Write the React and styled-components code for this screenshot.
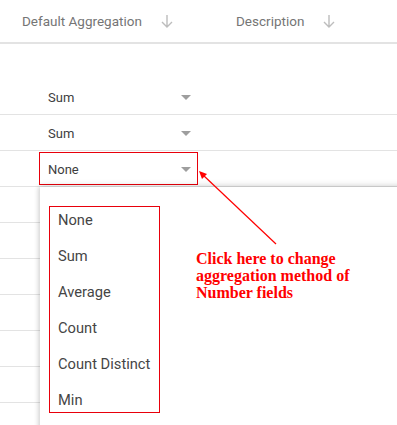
import * as React from "react";
import styled, { createGlobalStyle } from "styled-components";

const GlobalStyle = createGlobalStyle`
  html, body {
    margin: 0;
    padding: 0;
    background: #fff;
    overflow: hidden;
  }
  body {
    font-family: Roboto, "Liberation Sans", sans-serif;
  }
`;

const Page = styled.div`
  position: relative;
  width: 397px;
  height: 425px;
  overflow: hidden;
`;

const Header = styled.div`
  display: flex;
  align-items: center;
  height: 42px;
  border-bottom: 2px solid #e3e3e3;
  padding-left: 22px;
  color: #757575;
  font-size: 13.5px;
`;

const HeadCell = styled.div`
  display: flex;
  align-items: center;
  width: ${(p) => p.width}px;
  gap: 19px;
`;

const SortIcon = () => (
  <svg width="12" height="14" viewBox="0 0 12 14" fill="none" stroke="#bdbdbd" strokeWidth="1.4">
    <path d="M6 1v12M1 8l5 5 5-5" />
  </svg>
);

const Spacer = styled.div`
  height: 35px;
`;

const Row = styled.div`
  display: flex;
  align-items: center;
  height: 35px;
  border-bottom: 1px solid #e3e3e3;
  padding-left: 39px;
`;

const Select = styled.div`
  display: flex;
  align-items: center;
  justify-content: space-between;
  box-sizing: border-box;
  width: 159px;
  height: 33px;
  padding: 2px 6px 0 8px;
  border: 1px solid ${(p) => (p.marked ? "#e8000b" : "transparent")};
  color: #3d3d3d;
  font-size: 13px;
`;

const Caret = styled.span`
  width: 0;
  height: 0;
  border-left: 5px solid transparent;
  border-right: 5px solid transparent;
  border-top: 5px solid #9e9e9e;
`;

const Menu = styled.div`
  position: absolute;
  left: 40px;
  top: 187px;
  right: -20px;
  bottom: -20px;
  background: #fff;
  box-shadow: 0 -2px 6px rgba(0, 0, 0, 0.12), -2px 0 4px rgba(0, 0, 0, 0.1);
  padding: 19px 0 0 9px;
`;

const ItemList = styled.div`
  display: flex;
  flex-direction: column;
  gap: 12px;
  width: 111px;
  box-sizing: border-box;
  border: 1px solid #e8000b;
  padding: 1px 8px 0;
`;

const Item = styled.div`
  line-height: 24px;
  font-size: 14.7px;
  color: #454545;
  white-space: nowrap;
`;

const Note = styled.div`
  position: absolute;
  left: 196px;
  top: 250px;
  color: #ff0000;
  font-family: "Liberation Serif", "Times New Roman", serif;
  font-weight: bold;
  font-size: 16px;
  line-height: 17px;
`;

const Pointer = styled.svg`
  position: absolute;
  left: 0;
  top: 0;
  pointer-events: none;
`;

const rows = ["Sum", "Sum"];
const options = ["None", "Sum", "Average", "Count", "Count Distinct", "Min"];

export default function App() {
  return (
    <Page>
      <GlobalStyle />
      <Header>
        <HeadCell width={214}>
          Default Aggregation <SortIcon />
        </HeadCell>
        <HeadCell width={140}>
          Description <SortIcon />
        </HeadCell>
      </Header>
      <Spacer />
      {rows.map((r, i) => (
        <Row key={i}>
          <Select>
            {r}
            <Caret />
          </Select>
        </Row>
      ))}
      <Row>
        <Select marked>
          None
          <Caret />
        </Select>
      </Row>
      {[0, 1, 2, 3, 4, 5, 6].map((i) => (
        <Row key={"e" + i} />
      ))}
      <Menu>
        <ItemList>
          {options.map((o) => (
            <Item key={o}>{o}</Item>
          ))}
        </ItemList>
      </Menu>
      <Note>
        Click here to change
        <br />
        aggregation method of
        <br />
        Number fields
      </Note>
      <Pointer width="397" height="425">
        <line x1="276" y1="244" x2="203" y2="175" stroke="#ff0000" strokeWidth="1.2" />
        <polygon points="199,171 207,174 202,179" fill="#ff0000" />
      </Pointer>
    </Page>
  );
}
